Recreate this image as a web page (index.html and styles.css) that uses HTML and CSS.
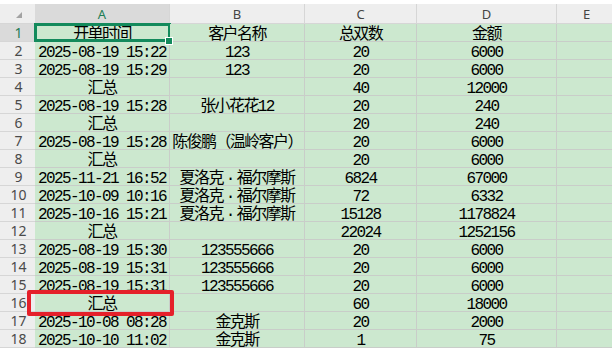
FILE: index.html
```html
<!DOCTYPE html>
<html lang="zh">
<head>
<meta charset="utf-8">
<link rel="stylesheet" href="styles.css">
</head>
<body>
<div class="sheet">
  <div class="corner"><span class="tri"></span></div>
  <div class="ch sel">A</div>
  <div class="ch">B</div>
  <div class="ch">C</div>
  <div class="ch">D</div>
  <div class="ch">E</div>

  <div class="rh sel">1</div>
  <div class="c active">开单时间<span class="handle"></span></div><div class="c">客户名称</div><div class="c">总双数</div><div class="c">金额</div><div class="c"></div>

  <div class="rh">2</div>
  <div class="c">2025-08-19 15:22</div><div class="c">123</div><div class="c">20</div><div class="c">6000</div><div class="c"></div>

  <div class="rh">3</div>
  <div class="c">2025-08-19 15:29</div><div class="c">123</div><div class="c">20</div><div class="c">6000</div><div class="c"></div>

  <div class="rh">4</div>
  <div class="c">汇总</div><div class="c"></div><div class="c">40</div><div class="c">12000</div><div class="c"></div>

  <div class="rh">5</div>
  <div class="c">2025-08-19 15:28</div><div class="c">张小花花12</div><div class="c">20</div><div class="c">240</div><div class="c"></div>

  <div class="rh">6</div>
  <div class="c">汇总</div><div class="c"></div><div class="c">20</div><div class="c">240</div><div class="c"></div>

  <div class="rh">7</div>
  <div class="c">2025-08-19 15:28</div><div class="c">陈俊鹏（温岭客户）</div><div class="c">20</div><div class="c">6000</div><div class="c"></div>

  <div class="rh">8</div>
  <div class="c">汇总</div><div class="c"></div><div class="c">20</div><div class="c">6000</div><div class="c"></div>

  <div class="rh">9</div>
  <div class="c">2025-11-21 16:52</div><div class="c">夏洛克<span class="dot">·</span>福尔摩斯</div><div class="c">6824</div><div class="c">67000</div><div class="c"></div>

  <div class="rh">10</div>
  <div class="c">2025-10-09 10:16</div><div class="c">夏洛克<span class="dot">·</span>福尔摩斯</div><div class="c">72</div><div class="c">6332</div><div class="c"></div>

  <div class="rh">11</div>
  <div class="c">2025-10-16 15:21</div><div class="c">夏洛克<span class="dot">·</span>福尔摩斯</div><div class="c">15128</div><div class="c">1178824</div><div class="c"></div>

  <div class="rh">12</div>
  <div class="c">汇总</div><div class="c"></div><div class="c">22024</div><div class="c">1252156</div><div class="c"></div>

  <div class="rh">13</div>
  <div class="c">2025-08-19 15:30</div><div class="c">123555666</div><div class="c">20</div><div class="c">6000</div><div class="c"></div>

  <div class="rh">14</div>
  <div class="c">2025-08-19 15:31</div><div class="c">123555666</div><div class="c">20</div><div class="c">6000</div><div class="c"></div>

  <div class="rh">15</div>
  <div class="c">2025-08-19 15:31</div><div class="c">123555666</div><div class="c">20</div><div class="c">6000</div><div class="c"></div>

  <div class="rh">16</div>
  <div class="c marked">汇总<span class="redbox"></span></div><div class="c"></div><div class="c">60</div><div class="c">18000</div><div class="c"></div>

  <div class="rh">17</div>
  <div class="c">2025-10-08 08:28</div><div class="c">金克斯</div><div class="c">20</div><div class="c">2000</div><div class="c"></div>

  <div class="rh">18</div>
  <div class="c">2025-10-10 11:02</div><div class="c">金克斯</div><div class="c">1</div><div class="c">75</div><div class="c"></div>
</div>
</body>
</html>
```
FILE: styles.css
```css
html, body {
  margin: 0;
  padding: 0;
  background: #ffffff;
  overflow: hidden;
}

.sheet {
  margin-top: 4px;
  display: grid;
  grid-template-columns: 35px 135px 135px 112px 140px 60px;
  grid-template-rows: 20px repeat(18, 18px);
  width: 617px;
}

.corner {
  background: #eeeeee;
  position: relative;
  border-bottom: 1px solid #d6d6d6;
}

.tri {
  position: absolute;
  left: 16px;
  top: 8px;
  width: 0;
  height: 0;
  border-left: 6px solid transparent;
  border-bottom: 6px solid #a3a3a3;
}

.ch {
  background: #eeeeee;
  border-right: 1px solid #d6d6d6;
  border-bottom: 1px solid #d6d6d6;
  box-sizing: border-box;
  font-family: "Noto Sans", "Liberation Sans", sans-serif;
  font-size: 13px;
  line-height: 20px;
  text-align: center;
  color: #444444;
}

.ch.sel {
  background: #dadada;
  color: #1e7d55;
}

.rh {
  background: #eeeeee;
  border-bottom: 1px solid #d6d6d6;
  box-sizing: border-box;
  font-family: "Noto Sans", "Liberation Sans", sans-serif;
  font-size: 14px;
  line-height: 18px;
  text-align: center;
  color: #4a4a4a;
  padding-left: 2px;
}

.rh.sel {
  background: #dadada;
  color: #1e7d55;
}

.c {
  position: relative;
  background: #cce8cf;
  border-right: 1px solid #c9cdc9;
  border-bottom: 1px solid #c9cdc9;
  box-sizing: border-box;
  font-family: "Liberation Mono", "Noto Sans CJK SC", monospace;
  font-size: 16px;
  letter-spacing: -1.6px;
  line-height: 12px;
  padding-top: 5px;
  text-align: center;
  color: #000000;
  white-space: nowrap;
  overflow: visible;
}

.dot {
  font-family: "Liberation Mono", monospace;
  margin: 0 3px;
}

.active::before {
  content: "";
  position: absolute;
  left: -1px;
  top: -1px;
  right: -2px;
  bottom: -1px;
  border: 3px solid #138a5c;
  pointer-events: none;
}

.handle {
  position: absolute;
  right: -4px;
  bottom: -4px;
  width: 6px;
  height: 6px;
  background: #138a5c;
  border: 1px solid #ffffff;
  z-index: 2;
}

.redbox {
  position: absolute;
  left: -8px;
  top: -4px;
  right: -5px;
  bottom: -5px;
  border: 4px solid #e5202a;
  border-radius: 2px;
  z-index: 3;
}
```
